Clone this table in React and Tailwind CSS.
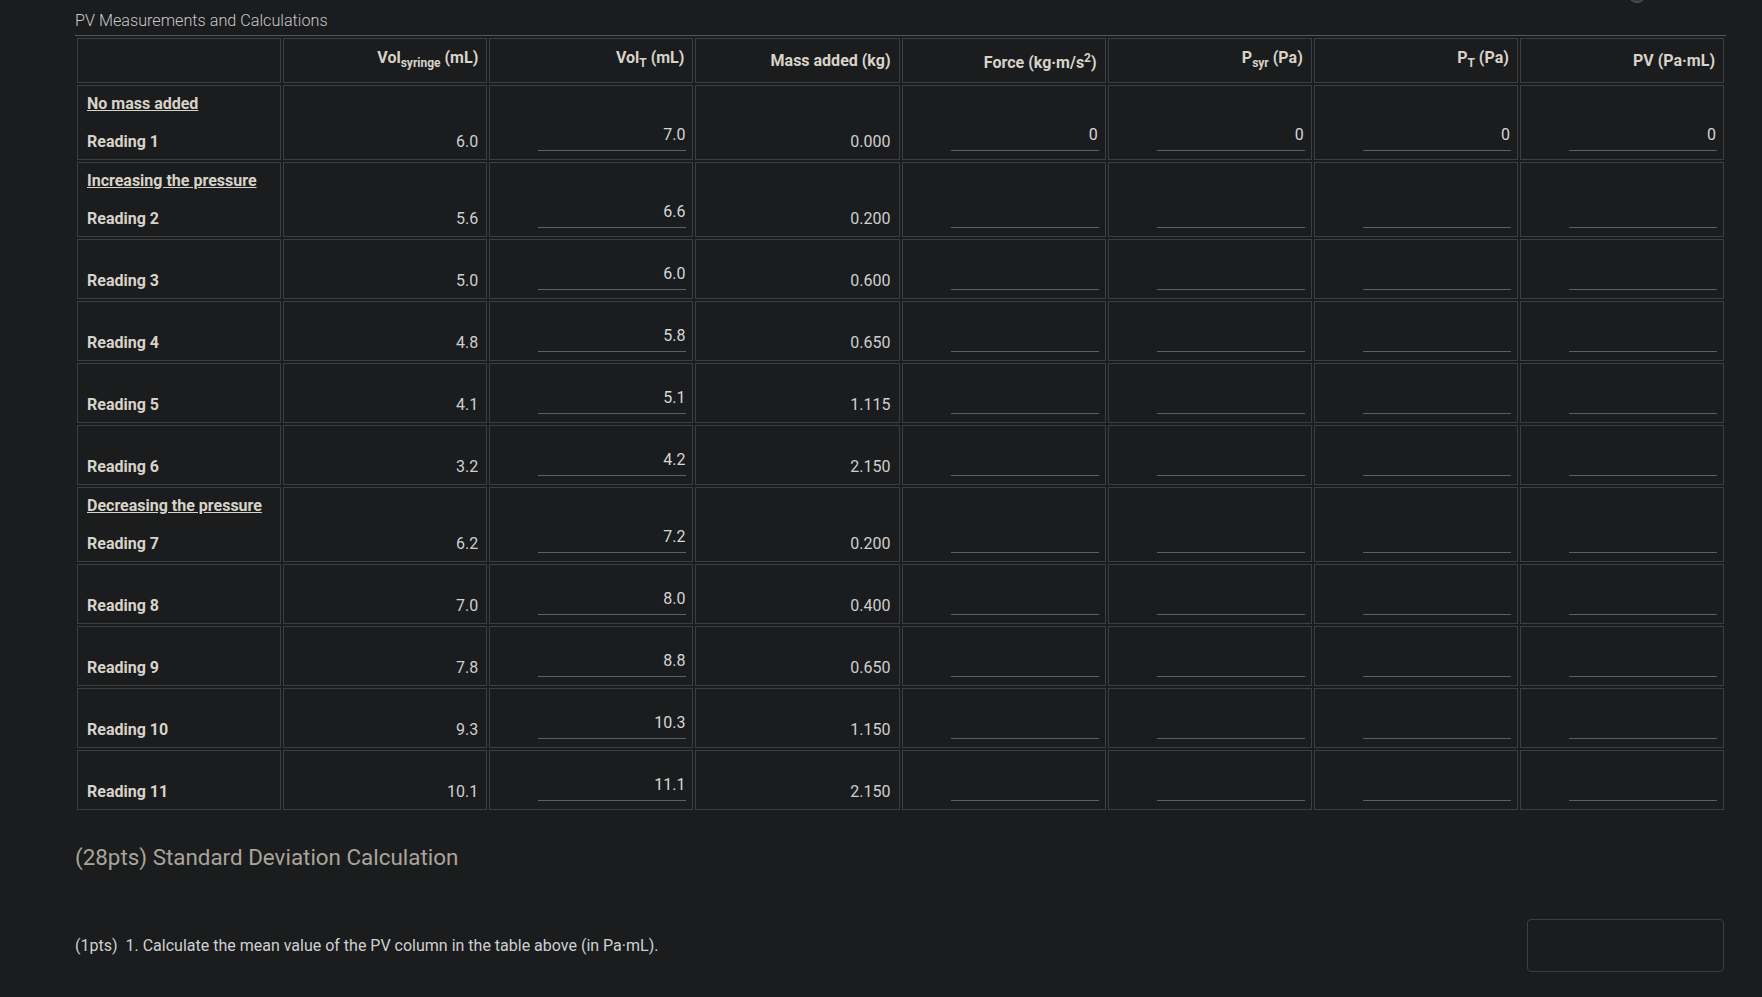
import React from "react";

const rows = [
  { heading: "No mass added", label: "Reading 1", vs: "6.0", vt: "7.0", mass: "0.000", calc: ["0", "0", "0", "0"] },
  { heading: "Increasing the pressure", label: "Reading 2", vs: "5.6", vt: "6.6", mass: "0.200" },
  { label: "Reading 3", vs: "5.0", vt: "6.0", mass: "0.600" },
  { label: "Reading 4", vs: "4.8", vt: "5.8", mass: "0.650" },
  { label: "Reading 5", vs: "4.1", vt: "5.1", mass: "1.115" },
  { label: "Reading 6", vs: "3.2", vt: "4.2", mass: "2.150" },
  { heading: "Decreasing the pressure", label: "Reading 7", vs: "6.2", vt: "7.2", mass: "0.200" },
  { label: "Reading 8", vs: "7.0", vt: "8.0", mass: "0.400" },
  { label: "Reading 9", vs: "7.8", vt: "8.8", mass: "0.650" },
  { label: "Reading 10", vs: "9.3", vt: "10.3", mass: "1.150" },
  { label: "Reading 11", vs: "10.1", vt: "11.1", mass: "2.150" },
];

function Inp({ value }) {
  return (
    <div className="flex justify-end mb-[3px]">
      <input
        readOnly
        value={value}
        className="w-[148px] h-[32px] bg-transparent border-0 border-b border-[#5e5f61] text-right text-[16px] text-[#d6d6d6] outline-none px-[1px] font-['Roboto']"
      />
    </div>
  );
}

const cell = "border border-[#3d3e40] align-bottom pb-[5px]";

export default function App() {
  return (
    <div className="relative min-h-[997px] bg-[#1b1c1e] font-['Roboto',sans-serif] text-[16px] leading-6 pl-[75px] pr-[36px] overflow-hidden">
      <div className="absolute left-[1628px] top-[-15px] w-[18px] h-[18px] rounded-full bg-[#3a3b3d] border border-[#5a5b5d]" />
      <div className="pt-[9px] pb-[2px] border-b border-[#55565a] text-[#c8c8c8] font-light text-[16.2px]">
        PV Measurements and Calculations
      </div>
      <table className="w-full table-fixed border-separate border-spacing-[2px]">
        <thead>
          <tr className="h-[45px]">
            <th className="border border-[#3d3e40] align-middle px-[8px]"></th>
            <th className="border border-[#3d3e40] align-middle text-right pr-[8px] font-bold text-[#d8d3c9]">
              Vol<span className="text-[12px] align-sub">syringe</span> (mL)
            </th>
            <th className="border border-[#3d3e40] align-middle text-right pr-[8px] font-bold text-[#d8d3c9]">
              Vol<span className="text-[12px] align-sub">T</span> (mL)
            </th>
            <th className="border border-[#3d3e40] align-middle text-right pr-[8px] font-bold text-[#d8d3c9]">
              Mass added (kg)
            </th>
            <th className="border border-[#3d3e40] align-middle text-right pr-[8px] font-bold text-[#d8d3c9]">
              Force (kg·m/s<span className="text-[12px] align-super">2</span>)
            </th>
            <th className="border border-[#3d3e40] align-middle text-right pr-[8px] font-bold text-[#d8d3c9]">
              P<span className="text-[12px] align-sub">syr</span> (Pa)
            </th>
            <th className="border border-[#3d3e40] align-middle text-right pr-[8px] font-bold text-[#d8d3c9]">
              P<span className="text-[12px] align-sub">T</span> (Pa)
            </th>
            <th className="border border-[#3d3e40] align-middle text-right pr-[8px] font-bold text-[#d8d3c9]">
              PV (Pa·mL)
            </th>
          </tr>
        </thead>
        <tbody>
          {rows.map((r) => {
            const calc = r.calc || ["", "", "", ""];
            return (
              <tr key={r.label} className={r.heading ? "h-[75px]" : "h-[60px]"}>
                <td className={`${cell} pl-[9px] pt-[4px] font-bold text-[#d8d3c9]`}>
                  {r.heading && <div className="underline mb-[14px]">{r.heading}</div>}
                  <div>{r.label}</div>
                </td>
                <td className={`${cell} text-right pr-[8px] text-[#cfcfcf]`}>{r.vs}</td>
                <td className={`${cell} pr-[6px]`}>
                  <Inp value={r.vt} />
                </td>
                <td className={`${cell} text-right pr-[8px] text-[#cfcfcf]`}>{r.mass}</td>
                {calc.map((c, i) => (
                  <td key={i} className={`${cell} pr-[6px]`}>
                    <Inp value={c} />
                  </td>
                ))}
              </tr>
            );
          })}
        </tbody>
      </table>
      <div className="mt-[29px] text-[22.4px] leading-8 font-normal text-[#aaa49b]">
        (28pts) Standard Deviation Calculation
      </div>
      <div className="mt-[46px] flex items-center justify-between pr-[2px]">
        <div className="text-[#d0d0d0]">
          (1pts)<span className="ml-[8px]">1. Calculate the mean value of the PV column in the table above (in Pa·mL).</span>
        </div>
        <div className="w-[197px] h-[53px] rounded-[4px] border border-[#3d3e40]" />
      </div>
    </div>
  );
}
